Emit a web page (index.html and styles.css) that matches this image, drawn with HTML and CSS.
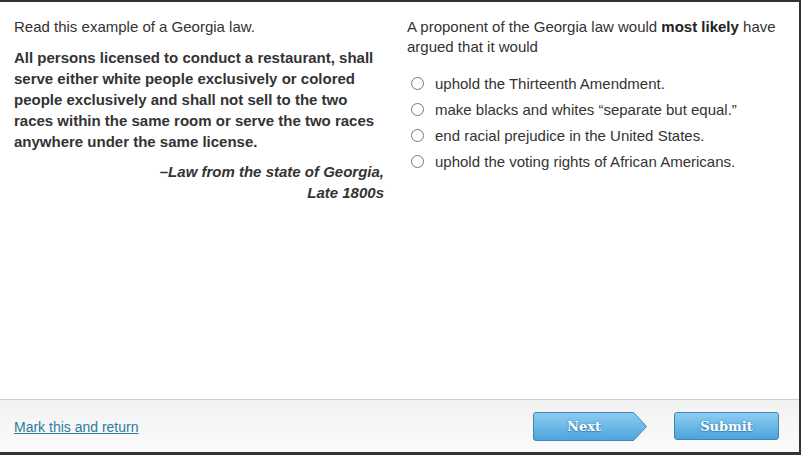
FILE: index.html
```html
<!DOCTYPE html>
<html>
<head>
<meta charset="utf-8">
<link rel="stylesheet" href="styles.css">
</head>
<body>
<div class="frame">
  <main class="content">
    <section class="passage">
      <p class="intro">Read this example of a Georgia law.</p>
      <p class="law">All persons licensed to conduct a restaurant, shall serve either white people exclusively or colored people exclusively and shall not sell to the two races within the same room or serve the two races anywhere under the same license.</p>
      <p class="source">–Law from the state of Georgia,<br>Late 1800s</p>
    </section>
    <section class="question">
      <p class="prompt">A proponent of the Georgia law would <b>most likely</b> have argued that it would</p>
      <ul class="options">
        <li class="option"><span class="radio"></span><span>uphold the Thirteenth Amendment.</span></li>
        <li class="option"><span class="radio"></span><span>make blacks and whites “separate but equal.”</span></li>
        <li class="option"><span class="radio"></span><span>end racial prejudice in the United States.</span></li>
        <li class="option"><span class="radio"></span><span>uphold the voting rights of African Americans.</span></li>
      </ul>
    </section>
  </main>
  <footer class="footer">
    <a class="mark" href="#">Mark this and return</a>
    <div class="actions">
      <div class="btn-next">
        <svg class="next-shape" width="115" height="29" viewBox="0 0 115 29">
          <defs>
            <linearGradient id="g1" x1="0" y1="0" x2="0" y2="1">
              <stop offset="0" stop-color="#8fcdf1"/>
              <stop offset="1" stop-color="#4ba4dc"/>
            </linearGradient>
          </defs>
          <path d="M3 0.5 H100.5 L113.5 14.5 L100.5 28.5 H3 Q0.5 28.5 0.5 26 V3 Q0.5 0.5 3 0.5 Z" fill="url(#g1)" stroke="#3f85bb" stroke-width="1"/>
        </svg>
        <span class="btn-label next-label">Next</span>
      </div>
      <div class="btn-submit"><span class="btn-label">Submit</span></div>
    </div>
  </footer>
</div>
</body>
</html>
```
FILE: styles.css
```css
html, body {
  margin: 0;
  padding: 0;
  background: #333;
}
.frame {
  width: 799px;
  height: 452px;
  margin-right: 2px;
  border-top: 2px solid #333;
  box-sizing: border-box;
  background: #fff;
  display: flex;
  flex-direction: column;
  font-family: "Liberation Sans", Arial, sans-serif;
  color: #333;
}
.content {
  flex: 1;
  display: grid;
  grid-template-columns: 372px 1fr;
  column-gap: 21px;
  padding: 15px 10px 0 14px;
}
p { margin: 0; }
.intro {
  font-size: 15px;
  line-height: 20px;
}
.law {
  font-size: 15px;
  font-weight: bold;
  line-height: 21px;
  margin-top: 10px;
}
.source {
  font-size: 15px;
  font-weight: bold;
  font-style: italic;
  line-height: 21px;
  text-align: right;
  margin-top: 9px;
  padding-right: 2px;
}
.prompt {
  font-size: 15px;
  line-height: 20px;
}
.prompt b { color: #222; }
.options {
  list-style: none;
  margin: 13px 0 0;
  padding: 0;
}
.option {
  display: flex;
  align-items: center;
  height: 26px;
  font-size: 15px;
}
.radio {
  width: 11px;
  height: 11px;
  border: 1px solid #777;
  border-radius: 50%;
  margin: 0 11px 0 4px;
  background: #fff;
  flex: none;
}
.footer {
  height: 53px;
  box-sizing: border-box;
  border-top: 1px solid #cfcfcf;
  background: linear-gradient(#f2f2f2, #fbfbfb);
  display: flex;
  align-items: center;
  justify-content: space-between;
  padding: 0 20px 0 14px;
}
.mark {
  color: #2b7d9c;
  font-size: 14px;
  text-decoration: underline;
  margin-top: 1px;
}
.actions {
  display: flex;
  align-items: center;
  gap: 26px;
}
.btn-next {
  display: grid;
  width: 115px;
  height: 29px;
  margin-top: 1px;
}
.next-shape, .next-label {
  grid-area: 1 / 1;
}
.next-label {
  width: 102px;
  align-self: center;
  text-align: center;
}
.btn-label {
  color: #fff;
  font-family: "DejaVu Serif", "Liberation Serif", serif;
  font-weight: bold;
  font-size: 13px;
  text-shadow: 0 0 2px #3a7fb4, 0 1px 1px #3a7fb4;
}
.btn-submit {
  width: 105px;
  height: 28px;
  box-sizing: border-box;
  border: 1px solid #3f85bb;
  border-radius: 3px;
  background: linear-gradient(#8fcdf1, #4ba4dc);
  display: flex;
  align-items: center;
  justify-content: center;
}
```
